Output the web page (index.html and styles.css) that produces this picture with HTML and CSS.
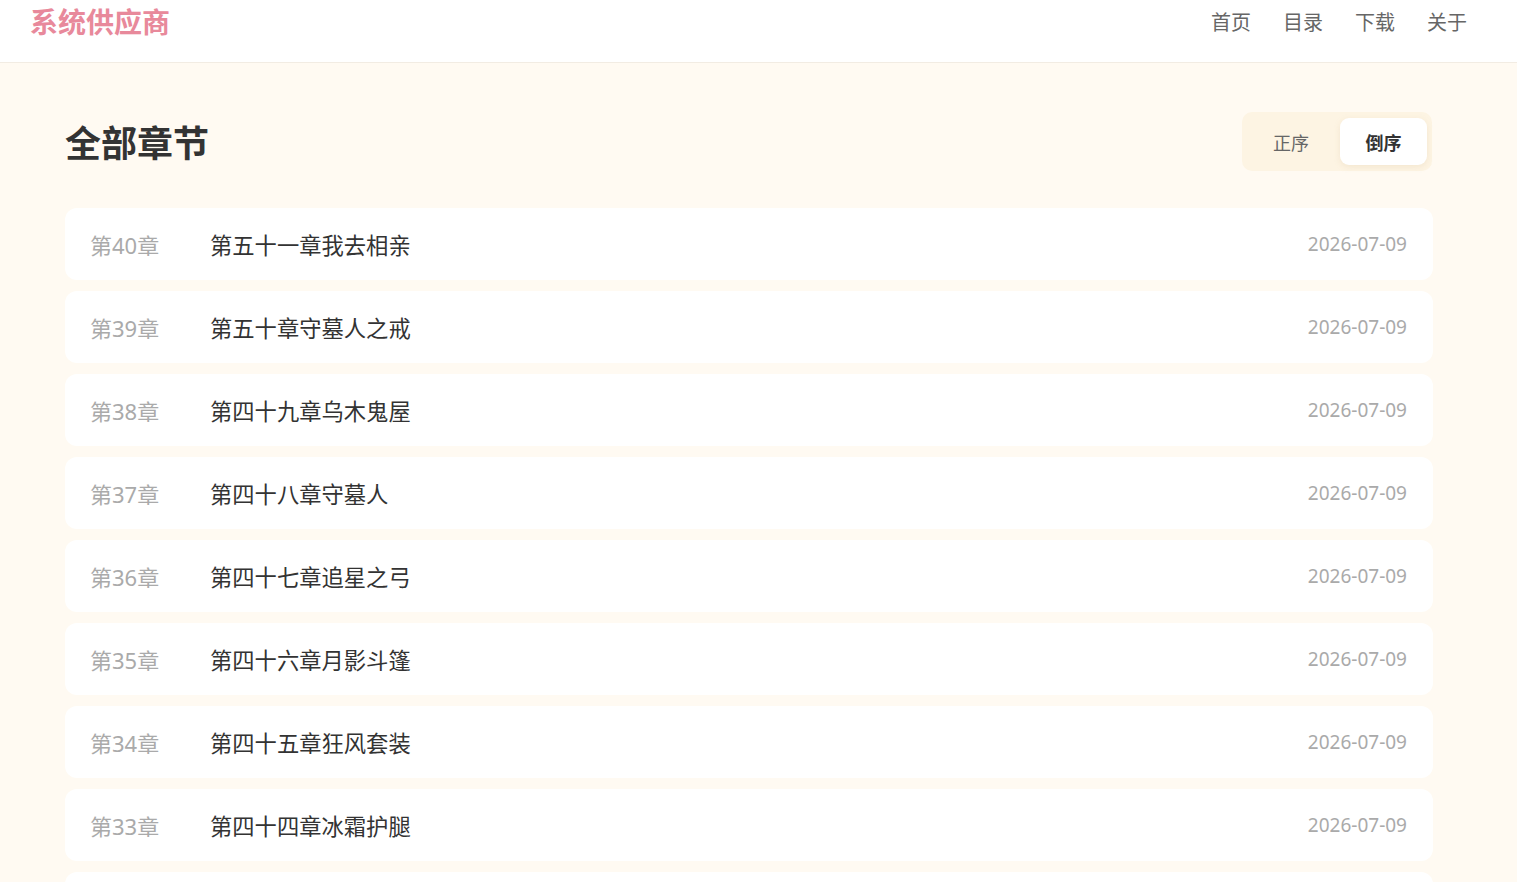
FILE: index.html
```html
<!DOCTYPE html>
<html lang="zh-CN">
<head>
<meta charset="utf-8">
<meta name="viewport" content="width=device-width, initial-scale=1.0">
<link rel="stylesheet" href="styles.css">
<title>全部章节 - 系统供应商</title>
</head>
<body>
  <header class="topbar">
    <div class="logo">系统供应商</div>
    <nav class="nav">
      <a href="#">首页</a>
      <a href="#">目录</a>
      <a href="#">下载</a>
      <a href="#">关于</a>
    </nav>
  </header>

  <main class="catalog">
    <div class="catalog-head">
      <h1>全部章节</h1>
      <div class="sort">
        <button class="sort-btn">正序</button>
        <button class="sort-btn active">倒序</button>
      </div>
    </div>

    <ul class="chapters">
      <li class="chapter"><span class="num">第40章</span><span class="title">第五十一章我去相亲</span><span class="date">2026-07-09</span></li>
      <li class="chapter"><span class="num">第39章</span><span class="title">第五十章守墓人之戒</span><span class="date">2026-07-09</span></li>
      <li class="chapter"><span class="num">第38章</span><span class="title">第四十九章乌木鬼屋</span><span class="date">2026-07-09</span></li>
      <li class="chapter"><span class="num">第37章</span><span class="title">第四十八章守墓人</span><span class="date">2026-07-09</span></li>
      <li class="chapter"><span class="num">第36章</span><span class="title">第四十七章追星之弓</span><span class="date">2026-07-09</span></li>
      <li class="chapter"><span class="num">第35章</span><span class="title">第四十六章月影斗篷</span><span class="date">2026-07-09</span></li>
      <li class="chapter"><span class="num">第34章</span><span class="title">第四十五章狂风套装</span><span class="date">2026-07-09</span></li>
      <li class="chapter"><span class="num">第33章</span><span class="title">第四十四章冰霜护腿</span><span class="date">2026-07-09</span></li>
      <li class="chapter"><span class="num">第32章</span><span class="title">第四十三章初入副本</span><span class="date">2026-07-09</span></li>
    </ul>
  </main>
</body>
</html>
```

FILE: styles.css
```css
* {
  box-sizing: border-box;
}
body {
  margin: 0;
  font-family: "Noto Sans", "Noto Sans CJK SC", sans-serif;
  background: #fffaf2;
  color: #333;
}

/* top bar */
.topbar {
  height: 63px;
  background: #fff;
  border-bottom: 1px solid #f2ece3;
  display: flex;
  justify-content: space-between;
  align-items: flex-start;
  padding: 0 50px 0 30px;
}
.logo {
  font-size: 28px;
  font-weight: 700;
  color: #e8899b;
  line-height: 45px;
}
.nav {
  display: flex;
  gap: 32px;
}
.nav a {
  font-size: 20px;
  line-height: 45px;
  color: #666;
  text-decoration: none;
}

/* chapter list */
.catalog {
  padding: 0 84px 0 65px;
}
.catalog-head {
  display: flex;
  justify-content: space-between;
  align-items: center;
  height: 145px;
  padding-top: 12px;
}
.catalog-head h1 {
  margin: 0;
  font-size: 36px;
  font-weight: 700;
  color: #333;
}
.sort {
  display: flex;
  background: #fdf4e3;
  border-radius: 10px;
  padding: 6px 5px 6px 0;
  margin-right: 1px;
}
.sort-btn {
  border: 0;
  background: none;
  font-family: inherit;
  font-size: 18px;
  color: #666;
  width: 98px;
  height: 47px;
  border-radius: 9px;
  cursor: pointer;
}
.sort-btn.active {
  width: 87px;
  background: #fff;
  color: #333;
  font-weight: 700;
  box-shadow: 0 2px 6px rgba(200, 170, 120, 0.18);
}
.chapters {
  list-style: none;
  margin: 0;
  padding: 0;
  display: flex;
  flex-direction: column;
  gap: 11px;
}
.chapter {
  display: flex;
  align-items: center;
  height: 72px;
  padding: 0 26px 0 25px;
  background: #fff;
  border-radius: 12px;
}
.num {
  width: 120px;
  font-size: 22px;
  color: #aaa;
}
.title {
  flex: 1;
  font-size: 22.3px;
  color: #333;
}
.date {
  font-size: 19px;
  color: #aaa;
}
```
